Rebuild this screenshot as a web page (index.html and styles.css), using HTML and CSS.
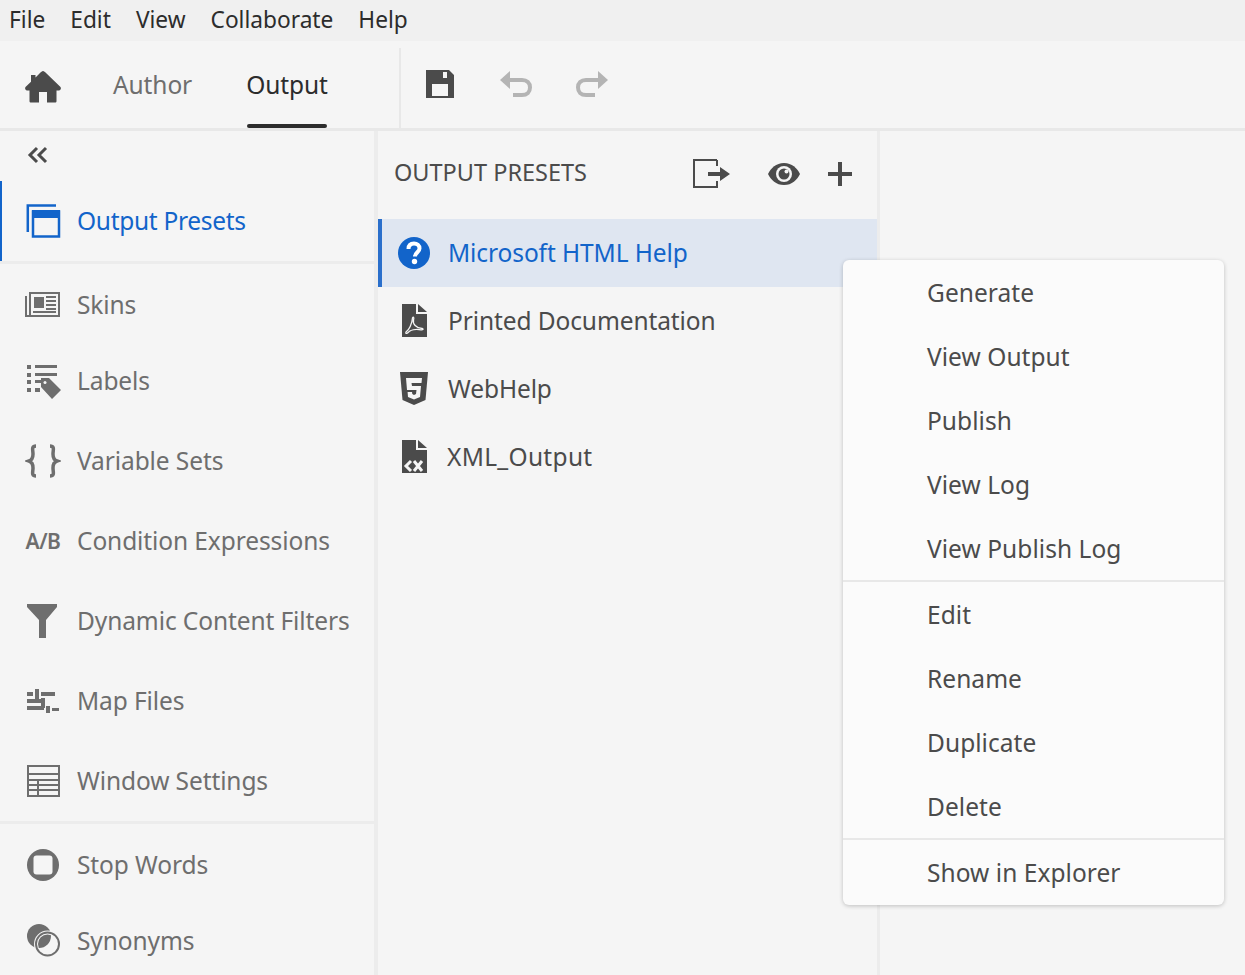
FILE: index.html
```html
<!DOCTYPE html>
<html lang="en">
<head>
<meta charset="utf-8">
<title>Output Presets</title>
<link rel="stylesheet" href="styles.css">
</head>
<body>
<div class="app">
  <nav class="menubar">
    <span>File</span><span>Edit</span><span>View</span><span>Collaborate</span><span>Help</span>
  </nav>
  <header class="toolbar">
    <div class="tabs">
      <svg class="home" width="36" height="32" viewBox="0 0 36 32"><path fill="#4b4b4b" d="M18 0 C19 0 20 1 21 2L35.500 16C36.500 17.500 35.500 19.500 34 19.500H31.500V30C31.500 31 31 31.500 30 31.500H22V21H14V31.500H6C5 31.500 4.500 31 4.500 30V19.500H2C.5 19.500 -.5 17.500 .5 16L6 10.700V4H10.500V6.400L15 2C16 1 17 0 18 0Z"/></svg>
      <span class="tab tab-author">Author</span>
      <span class="tab tab-output">Output</span>
    </div>
    <div class="actions">
      <svg width="30" height="30" viewBox="0 0 30 30"><path fill="#4b4b4b" fill-rule="evenodd" d="M1 1H24L29 6V29H1ZM18 3V9H22V3ZM7 15V27H23V15Z"/></svg>
      <svg width="34" height="28" viewBox="0 0 34 28"><path fill="none" stroke="#b4b4b4" stroke-width="4" d="M6 10H23C28 10 31 13 31 17.500S28 25 23 25H14"/><path fill="#b4b4b4" d="M11 1V19L1 10Z"/></svg>
      <svg width="34" height="28" viewBox="0 0 34 28"><path fill="none" stroke="#b4b4b4" stroke-width="4" d="M28 10H11C6 10 3 13 3 17.500S6 25 11 25H20"/><path fill="#b4b4b4" d="M23 1V19L33 10Z"/></svg>
    </div>
  </header>
  <main class="body">
    <aside class="sidebar">
      <div class="collapse">
        <svg width="22" height="18" viewBox="0 0 22 18"><path fill="none" stroke="#4b4b4b" stroke-width="3" d="M10 2 3 9 10 16M19 2 12 9 19 16"/></svg>
      </div>
      <div class="nav-row nav-active">
        <svg class="nav-icon" width="36" height="36" viewBox="0 0 36 36"><path fill="none" stroke="#1264ca" stroke-width="2.500" d="M2.800 29V2.500H31"/><rect x="8" y="8.500" width="26" height="25" fill="none" stroke="#1264ca" stroke-width="2.500"/><rect x="7" y="7" width="28" height="8" fill="#1264ca"/></svg>
        <span>Output Presets</span>
      </div>
      <div class="group">
        <div class="nav-row row-tall">
          <svg class="nav-icon" width="36" height="36" viewBox="0 0 36 36"><path fill="none" stroke="#6e6e6e" stroke-width="2" d="M1 9V29H34V6H5V29"/><rect x="9" y="10" width="10" height="11" fill="#6e6e6e"/><path stroke="#6e6e6e" stroke-width="2" d="M21 10H31M21 14H31M21 18H31M21 22H31M8 25H31"/></svg>
          <span>Skins</span>
        </div>
        <div class="nav-row row-short">
          <svg class="nav-icon" width="36" height="36" viewBox="0 0 36 36"><path fill="#6e6e6e" d="M2 2H6V6H2ZM10 2H32V5H10ZM2 10H6V14H2ZM10 10H32V13H10ZM2 17H6V21H2ZM10 17H20V20H10ZM2 25H6V29H2ZM10 25H15V29H10ZM16 15H24L36 27 27 36 16 24Z"/><circle cx="20" cy="19.500" r="1.500" fill="#f5f5f5"/></svg>
          <span>Labels</span>
        </div>
        <div class="nav-row row-gap">
          <svg class="nav-icon" width="36" height="36" viewBox="0 0 36 36"><path fill="none" stroke="#6e6e6e" stroke-width="3.500" d="M11 3C6 3 8 7 8 11 8 15 7 17 4 18 7 19 8 21 8 25 8 29 6 33 11 33M25 3C30 3 28 7 28 11 28 15 29 17 32 18 29 19 28 21 28 25 28 29 30 33 25 33"/></svg>
          <span>Variable Sets</span>
        </div>
        <div class="nav-row">
          <span class="nav-icon ab">A/B</span>
          <span>Condition Expressions</span>
        </div>
        <div class="nav-row">
          <svg class="nav-icon" width="36" height="36" viewBox="0 0 36 36"><path fill="#6e6e6e" d="M2 1H32V4L21 17V35H14V17L2 4Z"/></svg>
          <span>Dynamic Content Filters</span>
        </div>
        <div class="nav-row">
          <svg class="nav-icon" width="36" height="36" viewBox="0 0 36 36"><path fill="#6e6e6e" d="M2 9H8V13H2ZM10 6H14V16H10ZM16 9H30V13H16ZM2 16H16V20H2ZM16 15H20V25H16ZM2 23H19V27H2ZM21 23H25V30H21ZM27 25H34V28H27Z"/></svg>
          <span>Map Files</span>
        </div>
        <div class="nav-row">
          <svg class="nav-icon" width="36" height="36" viewBox="0 0 36 36"><path fill="none" stroke="#6e6e6e" stroke-width="2" d="M3 3H34V33H3ZM3 11H34M3 17H34M3 22H34M3 27H34M13 17V33"/></svg>
          <span>Window Settings</span>
        </div>
      </div>
      <div class="group group-last">
        <div class="nav-row row-tall">
          <svg class="nav-icon" width="36" height="36" viewBox="0 0 36 36"><circle cx="18" cy="18" r="16" fill="#6e6e6e"/><rect x="8.500" y="8.500" width="19" height="19" rx="3" fill="#f5f5f5"/></svg>
          <span>Stop Words</span>
        </div>
        <div class="nav-row row-short">
          <svg class="nav-icon" width="36" height="36" viewBox="0 0 36 36"><circle cx="14" cy="13" r="12" fill="#6e6e6e"/><circle cx="22.500" cy="21" r="11.500" fill="none" stroke="#f5f5f5" stroke-width="4"/><circle cx="22.500" cy="21" r="11.500" fill="none" stroke="#6e6e6e" stroke-width="2"/></svg>
          <span>Synonyms</span>
        </div>
      </div>
    </aside>
    <section class="panel">
      <div class="panel-head">
        <span class="panel-title">OUTPUT PRESETS</span>
        <div class="panel-actions">
          <svg class="act-export" width="37" height="30" viewBox="0 0 37 30"><path fill="none" stroke="#4b4b4b" stroke-width="2" d="M24 1H1V28H24V22"/><path fill="none" stroke="#4b4b4b" stroke-width="2" d="M24 1V7"/><path fill="#4b4b4b" d="M15 13H27V8L37 15 27 22V17H15Z"/></svg>
          <svg class="act-eye" width="32" height="24" viewBox="0 0 32 24"><path fill="#4b4b4b" d="M16 1C24 1 29 6 32 12 29 18 24 23 16 23 8 23 3 18 0 12 3 6 8 1 16 1Z"/><circle cx="16" cy="12" r="8" fill="#f5f5f5"/><circle cx="16" cy="12" r="5.500" fill="#4b4b4b"/><circle cx="18.500" cy="9.500" r="2" fill="#f5f5f5"/></svg>
          <svg class="act-plus" width="24" height="24" viewBox="0 0 24 24"><path fill="#4b4b4b" d="M10 0H14V10H24V14H14V24H10V14H0V10H10Z"/></svg>
        </div>
      </div>
      <div class="preset preset-active">
        <svg class="preset-icon" width="34" height="34" viewBox="0 0 34 34"><circle cx="17" cy="17" r="16" fill="#1264ca"/><path fill="none" stroke="#fff" stroke-width="4" d="M11.500 13C11.500 9 14 7.500 17 7.500S22.500 9.500 22.500 12.500C22.500 16 18 16.500 18 20.500"/><circle cx="17.500" cy="25.500" r="2.700" fill="#fff"/></svg>
        <span>Microsoft HTML Help</span>
      </div>
      <div class="preset">
        <svg class="preset-icon" width="34" height="34" viewBox="0 0 34 34"><path fill="#4b4b4b" d="M5 0H19V10H30V33H5ZM21 0 30 8H21Z"/><path fill="none" stroke="#f5f5f5" stroke-width="1.300" d="M9 28C12 26 15 20 15.500 14 15.800 12.500 17.500 13 16.500 16 15.500 20 19 24 25 24.500 27 25 26 26 24 25.800 19 25 13 26 10.500 29 9 30 8.500 29 9 28Z"/></svg>
        <span>Printed Documentation</span>
      </div>
      <div class="preset">
        <svg class="preset-icon" width="34" height="34" viewBox="0 0 34 34"><path fill="#4b4b4b" d="M3 0H31L28.500 28 17 33 5.500 28Z"/><path fill="#f5f5f5" d="M9 6H25L24.500 11H14.500L15 14H24L23 25 17 27.500 11 25 10.600 20H15L15.300 22 17 23 19 22 19.500 18H10Z"/></svg>
        <span>WebHelp</span>
      </div>
      <div class="preset preset-xml">
        <svg class="preset-icon" width="34" height="34" viewBox="0 0 34 34"><path fill="#4b4b4b" d="M5 0H19V10H30V33H5ZM21 0 30 8H21Z"/><path fill="none" stroke="#f5f5f5" stroke-width="3" d="M14 21 9 26 14 31M17 21 25 31M25 21 17 31"/></svg>
        <span>XML_Output</span>
      </div>
    </section>
    <div class="rest"></div>
  </main>
  <div class="menu">
    <div class="menu-section">
      <div class="menu-item">Generate</div>
      <div class="menu-item">View Output</div>
      <div class="menu-item">Publish</div>
      <div class="menu-item">View Log</div>
      <div class="menu-item">View Publish Log</div>
    </div>
    <div class="menu-section">
      <div class="menu-item">Edit</div>
      <div class="menu-item">Rename</div>
      <div class="menu-item">Duplicate</div>
      <div class="menu-item">Delete</div>
    </div>
    <div class="menu-section">
      <div class="menu-item">Show in Explorer</div>
    </div>
  </div>
</div>
</body>
</html>
```

FILE: styles.css
```css
* { box-sizing: border-box; }
html, body { margin: 0; height: 100%; overflow: hidden; }
body {
  font-family: "Noto Sans", "Open Sans", sans-serif;
  font-size: 24.5px;
  letter-spacing: -0.1px;
  color: #4b4b4b;
  background: #f5f5f5;
}
svg { display: block; flex: none; }
.app { position: relative; width: 1245px; height: 975px; overflow: hidden; }

.menubar {
  display: flex;
  align-items: center;
  gap: 25px;
  height: 41px;
  padding: 0 0 3px 9px;
  background: #f0f0f0;
  color: #2c2c2c;
  font-size: 22.7px;
  letter-spacing: 0;
}

.toolbar {
  display: flex;
  height: 90px;
  border-bottom: 3px solid #e8e8e8;
}
.tabs {
  display: flex;
  align-items: center;
  width: 399px;
  padding-left: 25px;
  height: 87px;
}
.home { margin-right: 52px; margin-top: 4px; }
.tab { display: flex; align-items: center; height: 87px; padding-bottom: 1px; position: relative; }
.tab-author { color: #6e6e6e; width: 79px; margin-right: 55px; white-space: nowrap; }
.tab-output { color: #2c2c2c; width: 80px; justify-content: center; }
.tab-output::after {
  content: "";
  position: absolute;
  left: 0;
  right: 0;
  bottom: 0;
  height: 4px;
  border-radius: 2px;
  background: #2c2c2c;
}
.actions {
  display: flex;
  align-items: center;
  gap: 44px;
  margin-top: 7px;
  padding: 0 0 8px 24px;
  border-left: 2px solid #e8e8e8;
}
.actions svg:nth-child(3) { margin-left: -2px; }

.body { display: flex; height: 844px; }

.sidebar {
  width: 378px;
  flex: none;
  border-right: 4px solid #ececec;
  color: #6e6e6e;
}
.collapse { height: 50px; padding: 15px 0 0 27px; }
.nav-row {
  display: flex;
  align-items: center;
  gap: 16px;
  height: 80px;
  padding-left: 25px;
}
.nav-row > span:last-child { margin-bottom: 2px; }
.nav-active {
  color: #1264ca;
  border-left: 2px solid #1264ca;
  padding-left: 23px;
  letter-spacing: -0.3px;
}
.group { border-top: 3px solid #ececec; }
.group-last { border-top: 3px solid #ececec; }
.row-tall { height: 82px; }
.row-short { height: 70px; }
.row-gap { margin-top: 5px; }
.nav-icon { width: 36px; }
.ab { font-weight: 600; font-size: 21px; letter-spacing: -0.5px; white-space: nowrap; text-align: center; }

.panel {
  width: 502px;
  flex: none;
  border-right: 3px solid #ececec;
}
.panel-head {
  display: flex;
  align-items: center;
  justify-content: space-between;
  height: 88px;
  padding: 0 25px 3px 16px;
}
.panel-title { font-size: 23.5px; letter-spacing: 0; margin-bottom: 4px; }
.panel-actions { display: flex; align-items: center; }
.act-export { margin-right: 38px; }
.act-eye { margin-right: 28px; }
.preset {
  display: flex;
  align-items: center;
  gap: 17px;
  height: 68px;
  padding-left: 19px;
}
.preset > span { margin-bottom: 2px; }
.preset-active {
  color: #1264ca;
  background: #dfe6f1;
  border-left: 4px solid #2a6fcb;
  padding-left: 15px;
}
.preset-xml { gap: 16px; letter-spacing: 0.3px; }
.rest { flex: 1; }

.menu {
  position: absolute;
  left: 843px;
  top: 260px;
  width: 381px;
  height: 645px;
  background: #fbfbfb;
  border-radius: 6px;
  box-shadow: 0 1px 4px rgba(0, 0, 0, 0.22);
  letter-spacing: 0.05px;
}
.menu-section { padding-top: 2px; }
.menu-section + .menu-section { border-top: 2px solid #e8e8e8; }
.menu-item {
  display: flex;
  align-items: center;
  height: 64px;
  padding: 0 0 3px 84px;
}
.menu-item:last-child { margin-bottom: -2px; }
```
